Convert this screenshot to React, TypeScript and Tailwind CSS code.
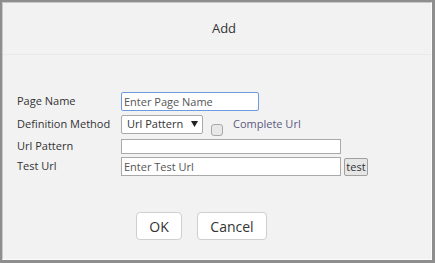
import React from "react";

export default function App() {
  const font = { fontFamily: '"Open Sans", "Noto Sans", sans-serif' };
  return (
    <div
      style={font}
      className="w-[435px] h-[263px] bg-[#8e8e8e] pt-[2px] pl-[2px] pr-[3px] pb-[3px]"
    >
      <div className="w-full h-full bg-[#f2f2f2] border-l border-t border-[#c9c9c9] border-r border-r-[#fbfbfb] border-b border-b-[#fbfbfb] flex flex-col">
        <div className="h-[52px] border-b border-[#e9e9e9] flex items-center justify-center pl-[14px] pt-[1px] text-[13px] text-[#333]">
          Add
        </div>
        <div className="flex flex-col pl-[14px] pt-[37px] text-[11px] text-[#333]">
          <div className="flex items-center h-[19px]">
            <div className="w-[104px]">Page Name</div>
            <input
              readOnly
              placeholder="Enter Page Name"
              className="w-[138px] h-[19px] border border-[#6d9be0] rounded-[2px] bg-white px-[2px] text-[11px] outline-none placeholder:text-[#555]"
              style={font}
            />
          </div>
          <div className="flex items-center h-[19px] mt-[4px]">
            <div className="w-[104px]">Definition Method</div>
            <div className="w-[82px] h-[19px] border border-[#a9a9a9] rounded-[2px] bg-white flex items-center pl-[5px] pr-[4px] justify-between">
              <span>Url Pattern</span>
              <svg width="7" height="6" viewBox="0 0 7 6" className="mb-[2px]">
                <path d="M0 0 H7 L3.5 6 Z" fill="#222" />
              </svg>
            </div>
            <div className="ml-[8px] mt-[10px] w-[12px] h-[12px] border border-[#a9a9a9] rounded-[3px] bg-[#e8e8e8]" />
            <div className="ml-[10px] -mt-[1px] text-[#5a5a7c]">Complete Url</div>
          </div>
          <div className="flex items-center h-[15px] mt-[5px]">
            <div className="w-[104px]">Url Pattern</div>
            <div className="w-[220px] h-[15px] border border-[#a9a9a9] bg-white" />
          </div>
          <div className="flex items-center h-[19px] mt-[3px]">
            <div className="w-[104px]">Test Url</div>
            <input
              readOnly
              placeholder="Enter Test Url"
              className="w-[220px] h-[19px] border border-[#a9a9a9] bg-white px-[2px] text-[11px] outline-none placeholder:text-[#555]"
              style={font}
            />
            <button
              className="ml-[3px] w-[24px] h-[18px] border border-[#a0a0a0] rounded-[2px] bg-[#e6e6e6] text-[11px] leading-none flex items-center justify-center text-[#333]"
              style={font}
            >
              test
            </button>
          </div>
          <div className="flex mt-[36px] pl-[119px] gap-[15px]">
            <button
              className="w-[46px] h-[28px] border border-[#cfcfcf] rounded-[4px] bg-white text-[14px] text-[#333]"
              style={font}
            >
              OK
            </button>
            <button
              className="w-[70px] h-[28px] border border-[#cfcfcf] rounded-[4px] bg-white text-[14px] text-[#333]"
              style={font}
            >
              Cancel
            </button>
          </div>
        </div>
      </div>
    </div>
  );
}
